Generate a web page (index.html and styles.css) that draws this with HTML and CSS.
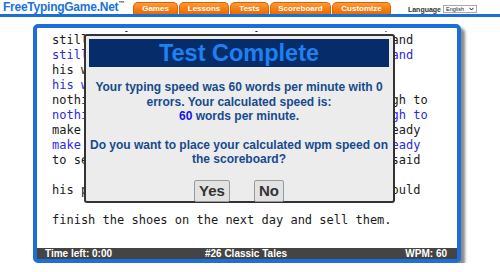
FILE: index.html
```html
<!DOCTYPE html>
<html lang="en">
<head>
  <meta charset="UTF-8">
  <title>Free Typing Game - Test Complete</title>
  <link rel="stylesheet" href="styles.css">
</head>
<body>

  <header class="topbar">
    <div class="logo">FreeTypingGame.Net<span class="tm">™</span></div>
    <nav class="tabs">
      <a class="tab tab-games" href="#">Games</a>
      <a class="tab tab-lessons" href="#">Lessons</a>
      <a class="tab tab-tests" href="#">Tests</a>
      <a class="tab tab-scores" href="#">Scoreboard</a>
      <a class="tab tab-custom" href="#">Customize</a>
    </nav>
    <div class="lang">
      <span class="lang-label">Language</span>
      <span class="lang-select">English
        <svg width="5" height="4" viewBox="0 0 5 4"><path d="M0.5 0.8 L2.5 3 L4.5 0.8" fill="none" stroke="#222" stroke-width="1"/></svg>
      </span>
    </div>
  </header>

  <main class="game">
    <div class="text-area">
      <div class="text">
        <div class="line">worked very hard and was very honest; but in spite</div>
        <div class="line">still, he could not earn enough money to live, and</div>
        <div class="line typed">still, he could not earn enough money to live, and</div>
        <div class="line">his wife and he became poorer and poorer,</div>
        <div class="line typed">his wife and he became poorer and poorer,</div>
        <div class="line">nothing was left but one piece of leather, enough to</div>
        <div class="line typed">nothing was left but one piece of leather, enough to</div>
        <div class="line">make one pair of shoes. In the evening he got ready</div>
        <div class="line typed">make one pair of shoes. In the evening he got ready</div>
        <div class="line">to sew them early in the morning, and his wife said</div>
        <div class="line"></div>
        <div class="line">his prayers, and hoped that with good luck he could</div>
        <div class="line"></div>
        <div class="line">finish the shoes on the next day and sell them.</div>
      </div>
    </div>

    <div class="status">
      <span class="status-left">Time left: 0:00</span>
      <span class="status-mid">#26 Classic Tales</span>
      <span class="status-right">WPM: 60</span>
    </div>

    <div class="modal">
      <h2 class="modal-title">Test Complete</h2>
      <p class="modal-text">
        Your typing speed was 60 words per minute with 0<br>
        errors. Your calculated speed is:<br>
        <span class="wpm">60</span> words per minute.
      </p>
      <p class="modal-text">
        Do you want to place your calculated wpm speed on<br>
        the scoreboard?
      </p>
      <div class="modal-buttons">
        <button class="btn">Yes</button>
        <button class="btn">No</button>
      </div>
    </div>
  </main>

</body>
</html>
```

FILE: styles.css
```css
body {
  margin: 0;
  padding: 0;
  background: #fff;
  font-family: 'Liberation Sans', Arial, sans-serif;
}

/* Header */
.topbar {
  display: flex;
  align-items: flex-end;
  height: 14px;
  border-bottom: 3px solid #1a6fd6;
}

.logo {
  width: 130px;
  padding-left: 3px;
  font-size: 12px;
  line-height: 14px;
  font-weight: bold;
  letter-spacing: -0.25px;
  color: #1a73dc;
  white-space: nowrap;
}

.logo .tm {
  font-size: 6px;
  vertical-align: 6px;
  color: #333;
  letter-spacing: 0;
}

.tabs {
  display: flex;
  gap: 1px;
}

.tab {
  display: block;
  height: 12px;
  line-height: 12px;
  box-sizing: border-box;
  text-align: center;
  font-size: 8px;
  font-weight: bold;
  color: #fff;
  text-decoration: none;
  background: linear-gradient(#ff9a3a, #f47a10 60%, #ec6c00);
  border: 1px solid #d86400;
  border-bottom: none;
  border-radius: 5px 5px 0 0;
}

.tab-games { width: 45px; }
.tab-lessons { width: 50px; }
.tab-tests { width: 39px; }
.tab-scores { width: 61px; }
.tab-custom { width: 59px; }

.lang {
  display: flex;
  align-items: center;
  gap: 2px;
  margin-left: auto;
  margin-right: 23px;
  padding-bottom: 1px;
}

.lang-label {
  font-size: 7px;
  font-weight: bold;
  color: #333;
}

.lang-select {
  display: flex;
  align-items: center;
  justify-content: space-between;
  width: 34px;
  height: 8px;
  box-sizing: border-box;
  padding: 0 2px;
  border: 1px solid #aaa;
  font-size: 5.5px;
  line-height: 6px;
  color: #222;
  background: #fff;
}

/* Game box */
.game {
  position: relative;
  width: 420px;
  margin: 7px 0 0 33px;
  border: 4px solid #1c6fd9;
  border-radius: 5px;
  box-shadow: 4px 4px 3px #8a8a8a;
  background: #fff;
}

.text-area {
  height: 217px;
  margin-top: 3px;
  overflow: hidden;
}

.text {
  margin-top: -13px;
  padding-left: 15px;
  font-family: 'DejaVu Sans Mono', monospace;
  font-size: 12px;
  line-height: 15px;
  color: #1a1a1a;
}

.line {
  height: 15px;
  white-space: pre;
}

.line.typed {
  color: #2a2ae0;
}

.status {
  display: grid;
  grid-template-columns: 1fr auto 1fr;
  height: 11px;
  padding: 0 10px 0 8px;
  background: #444;
  color: #fff;
  font-size: 10px;
  line-height: 11px;
  font-weight: bold;
}

.status-right {
  text-align: right;
}

/* Modal */
.modal {
  position: absolute;
  left: 47px;
  top: 6px;
  width: 311px;
  height: 169px;
  box-sizing: border-box;
  padding: 3px 4px 3px 3px;
  border: 2px solid #333;
  border-radius: 3px;
  background: #ececec;
  text-align: center;
}

.modal-title {
  margin: 0;
  height: 28px;
  line-height: 28px;
  background: #062d69;
  color: #1e80f2;
  font-size: 23.5px;
  font-weight: bold;
}

.modal-text {
  margin: 13px 0 0 0;
  font-size: 12px;
  line-height: 14.5px;
  font-weight: bold;
  color: #174a8c;
}

.modal-text + .modal-text {
  margin-top: 14px;
}

.wpm {
  color: #1414e8;
}

.modal-buttons {
  display: flex;
  justify-content: center;
  gap: 24px;
  margin-top: 13px;
}

.btn {
  height: 22px;
  padding: 0 4px;
  border: 1px solid #9a9a9a;
  border-radius: 2px;
  background: #e2e2e2;
  font-family: 'Liberation Sans', Arial, sans-serif;
  font-size: 15px;
  font-weight: bold;
  color: #333;
}
```
